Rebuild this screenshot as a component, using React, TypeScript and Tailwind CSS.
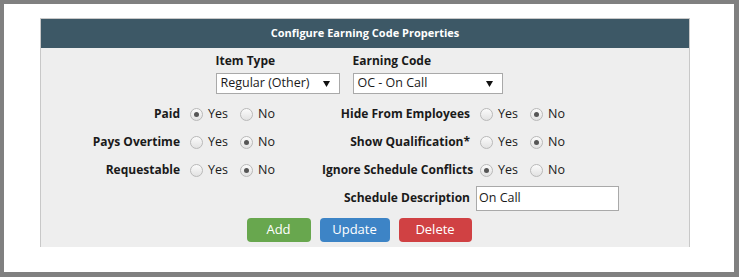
import React from "react";

function Radio({ checked }: { checked: boolean }) {
  return (
    <span className="flex h-[13px] w-[13px] shrink-0 items-center justify-center rounded-full border border-[#b9b9b9] bg-gradient-to-b from-[#fbfbfb] to-[#e2e2e2]">
      {checked && <span className="h-[5px] w-[5px] rounded-full bg-[#555]" />}
    </span>
  );
}

function YesNo({ value }: { value: "yes" | "no" }) {
  return (
    <div className="flex items-center">
      <label className="flex w-[50px] items-center gap-[5px]">
        <Radio checked={value === "yes"} />
        <span>Yes</span>
      </label>
      <label className="flex items-center gap-[5px]">
        <Radio checked={value === "no"} />
        <span>No</span>
      </label>
    </div>
  );
}

function Select({ value, width }: { value: string; width: string }) {
  return (
    <div
      className={`flex h-[21px] items-center justify-between border border-[#a9a9a9] bg-white pl-[4px] pr-[9px] ${width}`}
    >
      <span className="leading-none">{value}</span>
      <svg width="7" height="6" viewBox="0 0 7 6">
        <path d="M0 0 H7 L3.5 6 Z" fill="#111" />
      </svg>
    </div>
  );
}

function Label({ children }: { children: React.ReactNode }) {
  return <div className="whitespace-nowrap text-right text-[12px] font-bold">{children}</div>;
}

export default function App() {
  return (
    <div className="h-[277px] w-[739px] bg-[#808080] pb-[5px] pl-[4px] pr-[5px] pt-[4px]">
      <div className="h-full w-full bg-white pl-[36px] pt-[14px]">
        <div
          className="w-[650px] border-x border-t border-[#c8c8c8] bg-[#eeeeee] text-[12.5px] text-[#1a1a1a]"
          style={{ fontFamily: '"Open Sans", "Noto Sans", sans-serif' }}
        >
          <div className="flex h-[29px] items-center justify-center bg-[#3d5866] text-[11px] font-bold text-white">
            Configure Earning Code Properties
          </div>
          <div className="flex justify-center gap-[13px] pr-[12px] pt-[4px]">
            <div className="flex flex-col">
              <div className="h-[21px] text-[12px] font-bold leading-[18px]">Item Type</div>
              <Select value="Regular (Other)" width="w-[124px]" />
            </div>
            <div className="flex flex-col">
              <div className="h-[21px] text-[12px] font-bold leading-[18px]">Earning Code</div>
              <Select value="OC - On Call" width="w-[150px]" />
            </div>
          </div>
          <div className="mt-[6px] grid grid-cols-[139px_122px_148px_auto] auto-rows-[28px] items-center gap-x-[10px]">
            <Label>Paid</Label>
            <YesNo value="yes" />
            <Label>Hide From Employees</Label>
            <YesNo value="no" />

            <Label>Pays Overtime</Label>
            <YesNo value="no" />
            <Label>Show Qualification*</Label>
            <YesNo value="no" />

            <Label>Requestable</Label>
            <YesNo value="no" />
            <Label>Ignore Schedule Conflicts</Label>
            <YesNo value="yes" />

            <div />
            <div />
            <Label>Schedule Description</Label>
            <div className="-ml-[4px] flex h-[25px] w-[143px] items-center border border-[#a9a9a9] bg-white pl-[2px]">
              On Call
            </div>
          </div>
          <div className="flex justify-center gap-[9px] pb-[5px] pr-[12px] pt-[6px]">
            <button className="h-[24px] w-[64px] rounded-[4px] bg-[#68a74e] text-[13px] text-white">
              Add
            </button>
            <button className="h-[24px] w-[70px] rounded-[4px] bg-[#3d84c6] text-[13px] text-white">
              Update
            </button>
            <button className="h-[24px] w-[73px] rounded-[4px] bg-[#d04143] text-[13px] text-white">
              Delete
            </button>
          </div>
        </div>
      </div>
    </div>
  );
}
